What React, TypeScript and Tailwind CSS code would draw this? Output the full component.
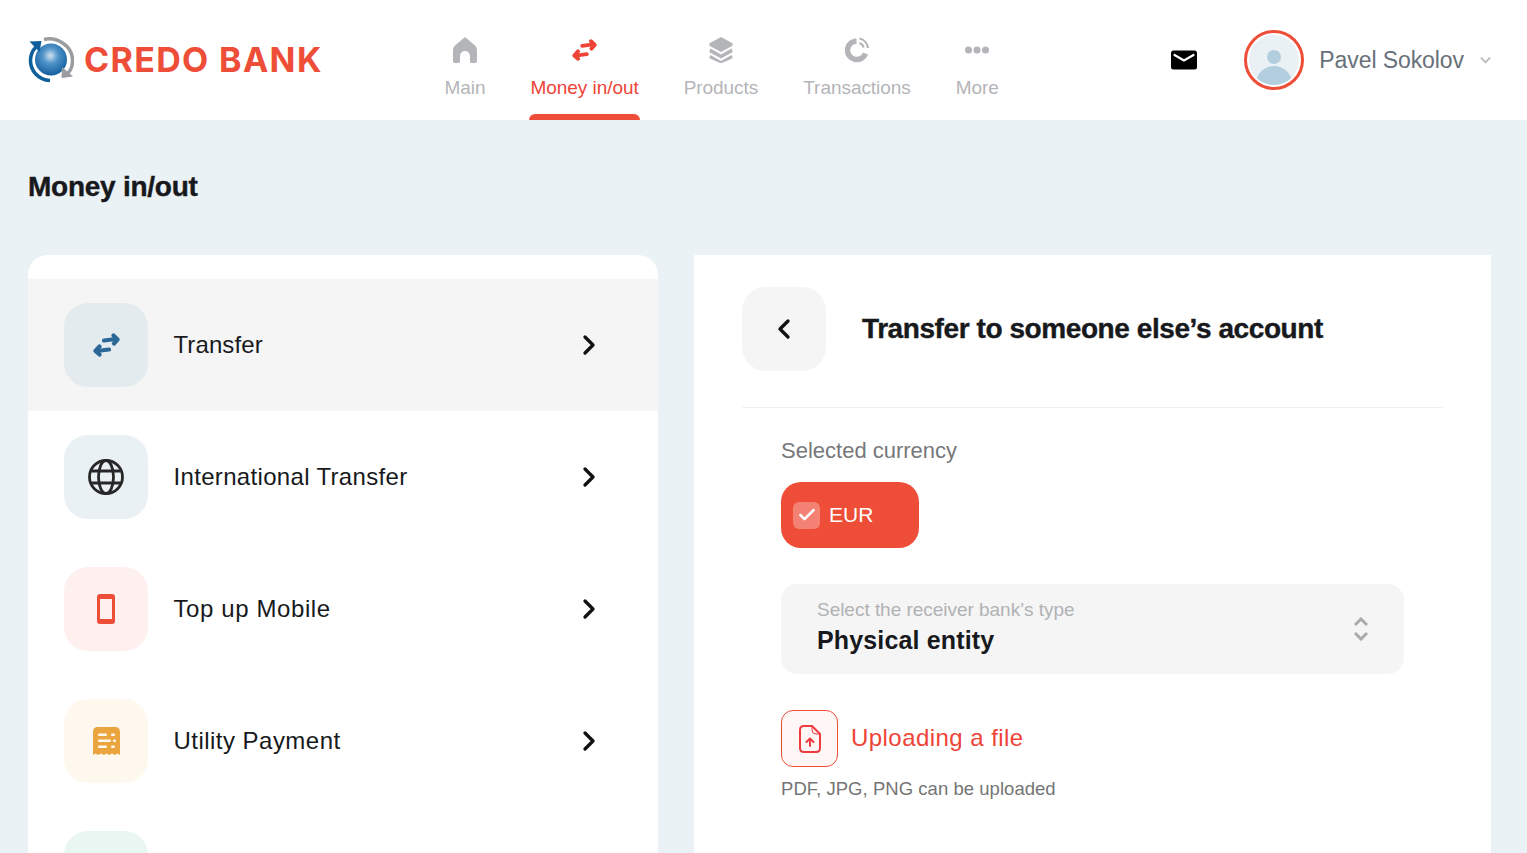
import { ChevronLeft, ChevronRight, Check } from "lucide-react";
import type { ReactNode } from "react";

function Arrows({ className }: { className?: string }) {
  return (
    <svg viewBox="0 0 27 24" className={className} fill="none" stroke="currentColor" strokeWidth="4.200" strokeLinecap="round" strokeLinejoin="round">
      <path d="M11 7.500 23 6" />
      <path d="M20.500 2.500 24.500 6.500 21 10.500" />
      <path d="M16 16.500 4 18" />
      <path d="M6.500 13.500 2.500 18 6.500 21.500" />
    </svg>
  );
}

function Logo() {
  return (
    <svg viewBox="0 0 46 46" className="h-[46px] w-[46px] shrink-0">
      <defs>
        <radialGradient id="globe" cx="0.48" cy="0.38" r="0.62">
          <stop offset="0" stopColor="#cfe2f0" />
          <stop offset="0.4" stopColor="#4f93c9" />
          <stop offset="1" stopColor="#135f9e" />
        </radialGradient>
      </defs>
      <circle cx="23" cy="22.500" r="16" fill="url(#globe)" />
      <path d="M22 43.500C10 43 2 33 2.500 22.500 2.800 17 5 13 8 10" fill="none" stroke="#0f5f9c" strokeWidth="3.500" />
      <path d="M1.500 4.500 13.500 4 11.500 15Z" fill="#0f5f9c" />
      <path d="M16 2.500C28 -0.500 44 8 44.500 22.500 44.700 29 43 33 40 36" fill="none" stroke="#9a9c9f" strokeWidth="3.500" />
      <path d="M45 39.500 33.500 41 34 30Z" fill="#9a9c9f" />
    </svg>
  );
}

const nav: { label: string; active?: boolean; icon: ReactNode }[] = [
  {
    label: "Main",
    icon: (
      <svg viewBox="0 0 24 26" className="h-[26px] w-6" fill="currentColor">
        <path d="M12 0 22 8.500Q24 10 24 13V24Q24 26 22 26H18Q17 26 17 24V19A5 5 0 0 0 7 19V24Q7 26 6 26H2Q0 26 0 24V13Q0 10 2 8.500Z" />
      </svg>
    ),
  },
  {
    label: "Money in/out",
    active: true,
    icon: <Arrows className="h-6 w-[25px]" />,
  },
  {
    label: "Products",
    icon: (
      <svg viewBox="0 0 24 26" className="h-[26px] w-6" fill="currentColor">
        <path d="M12 0 23 6Q24.500 7.500 23 9L12 15 1 9Q-.5 7.500 1 6Z" />
        <path d="M1.500 11.500 12 17.500 22.500 11.500 23.500 14Q24 15 23 15.500L12 21.500 1 15.500Q0 15 .5 14Z" />
        <path d="M1.500 18 12 24 22.500 18 23.500 20Q24 21 23 21.500L13 26H11L1 21.500Q0 21 .5 20Z" />
      </svg>
    ),
  },
  {
    label: "Transactions",
    icon: (
      <svg viewBox="0 0 24 26" className="h-[26px] w-6" fill="none" stroke="currentColor">
        <path d="M11.500 4A9.300 9.300 0 1 0 20.500 16.500" strokeWidth="5.500" />
        <path d="M14.500 1.500A11 11 0 0 1 23 11" strokeWidth="2.200" />
        <path d="M14.500 6A6 6 0 0 1 18.500 10.500" strokeWidth="2.200" />
      </svg>
    ),
  },
  {
    label: "More",
    icon: (
      <svg viewBox="0 0 24 26" className="h-[26px] w-6" fill="currentColor">
        <circle cx="3.500" cy="13" r="3.500" />
        <circle cx="12" cy="13" r="3.500" />
        <circle cx="20.500" cy="13" r="3.500" />
      </svg>
    ),
  },
];

const menu: { label: string; bg: string; text: string; active?: boolean; icon: ReactNode }[] = [
  {
    label: "Transfer",
    bg: "bg-[#e3ebef]",
    text: "tracking-[0.1px]",
    active: true,
    icon: <Arrows className="h-6 w-[27px] text-[#2a6796]" />,
  },
  {
    label: "International Transfer",
    bg: "bg-[#eaf1f5]",
    text: "tracking-[0.33px]",
    icon: (
      <svg viewBox="0 0 36 36" className="h-9 w-9" fill="none" stroke="#272727" strokeWidth="2.800">
        <circle cx="18" cy="18" r="16.500" />
        <ellipse cx="18" cy="18" rx="7.500" ry="16.500" />
        <path d="M3.500 12H32.500M3.500 24H32.500" />
      </svg>
    ),
  },
  {
    label: "Top up Mobile",
    bg: "bg-[#fdf0ee]",
    text: "tracking-[0.6px]",
    icon: (
      <svg viewBox="0 0 18 30" className="h-[30px] w-[18px]">
        <rect x="1.500" y="1.500" width="15" height="27" rx="1.500" fill="#fdf0ee" stroke="#ee4d38" strokeWidth="3" />
        <rect x="3" y="3" width="12" height="2" fill="#ee4d38" />
        <rect x="3" y="25" width="12" height="2" fill="#ee4d38" />
      </svg>
    ),
  },
  {
    label: "Utility Payment",
    bg: "bg-[#fff8ee]",
    text: "tracking-[0.47px]",
    icon: (
      <svg viewBox="0 0 27 28" className="h-7 w-[27px]">
        <path d="M0 5Q0 0 5 0H22Q27 0 27 5V28L24.500 26.500 22 28 19 26.500 16 28 13.500 26.500 11 28 8 26.500 5 28 2.500 26.500 0 28Z" fill="#eaa53f" />
        <g fill="#fff8ee">
          <rect x="5" y="6.500" width="9" height="2.500" rx="1" />
          <rect x="18" y="6.500" width="4" height="2.500" rx="1" />
          <rect x="5" y="12.500" width="13" height="2.500" rx="1" />
          <rect x="20" y="12.500" width="3" height="2.500" rx="1" />
          <rect x="5" y="18.500" width="9" height="2.500" rx="1" />
          <rect x="18" y="18.500" width="4" height="2.500" rx="1" />
        </g>
      </svg>
    ),
  },
];

export default function App() {
  return (
    <div className="h-screen overflow-hidden bg-[#ebf2f5] font-['Liberation_Sans',Arial,sans-serif] text-[#17191c]">
      {/* header */}
      <header className="flex h-[120px] items-center bg-white pl-7 pr-9">
        <div className="flex w-[416.500px] items-center gap-[10px]">
          <Logo />
          <span className="font-['Inter',sans-serif] text-[34px] leading-none font-bold tracking-[1.350px] whitespace-nowrap text-[#ee4d38]">CREDO BANK</span>
        </div>
        <nav className="flex h-full gap-[45px]">
          {nav.map((item) => (
            <div key={item.label} className={`relative flex flex-col items-center pt-[37px] text-[19px] leading-[22px] tracking-[-0.05px] ${item.active ? "text-[#ee4438]" : "text-[#b4b5b8]"}`}>
              <div className="flex h-[26px] items-center">{item.icon}</div>
              <span className="mt-[14px] whitespace-nowrap">{item.label}</span>
              {item.active && <div className="absolute -right-px bottom-0 -left-px h-[6px] rounded-t-lg bg-[#ee4d38]" />}
            </div>
          ))}
        </nav>
        <div className="ml-auto flex items-center">
          <svg viewBox="0 0 26 20" className="h-5 w-[26px]">
            <rect width="26" height="19" y="0.500" rx="2.500" fill="#000" />
            <path d="M3.500 5 13 10.500 22.500 5" fill="none" stroke="#fff" strokeWidth="2.200" strokeLinecap="round" />
          </svg>
          <div className="ml-[47px] h-[60px] w-[60px] overflow-hidden rounded-full border-[3px] border-[#ee4d38] bg-white p-[2px]">
            <svg viewBox="0 0 50 50" className="h-full w-full rounded-full bg-[#e9f1f5]">
              <circle cx="25" cy="22" r="7" fill="#b3cfdf" />
              <ellipse cx="25" cy="50" rx="18.500" ry="19" fill="#b3cfdf" />
            </svg>
          </div>
          <span className="ml-[15px] text-[23px] tracking-[-0.08px] whitespace-nowrap text-[#68707a]">Pavel Sokolov</span>
          <svg viewBox="0 0 12 8" className="ml-4 h-2 w-[11px] text-[#b4b5b8]" fill="none" stroke="currentColor" strokeWidth="1.800">
            <path d="M1 1.500 6 6.500 11 1.500" />
          </svg>
        </div>
      </header>

      <main className="px-7 pr-9">
        <h1 className="mt-[50px] text-[28px] leading-[34px] font-bold tracking-[-0.25px] [-webkit-text-stroke:0.4px_#17191c]">Money in/out</h1>

        <div className="mt-[51px] flex items-start gap-9">
          {/* left menu */}
          <div className="w-[630px] shrink-0 rounded-t-[20px] bg-white pt-6">
            {menu.map((item) => (
              <div key={item.label} className={`flex h-[132px] items-center pl-9 pr-[53px] ${item.active ? "bg-[#f5f5f5]" : ""}`}>
                <div className={`flex h-[84px] w-[84px] items-center justify-center rounded-3xl ${item.bg}`}>{item.icon}</div>
                <span className={`ml-[25.500px] flex-1 text-2xl ${item.text}`}>{item.label}</span>
                <ChevronRight className="h-8 w-8 text-[#111]" strokeWidth={2.500} />
              </div>
            ))}
            <div className="flex h-[132px] items-start pt-6 pl-9">
              <div className="h-[84px] w-[84px] rounded-3xl bg-[#e9f6f2]" />
            </div>
          </div>

          {/* right panel */}
          <section className="h-[700px] flex-1 bg-white px-12 pt-8">
            <div className="flex items-center gap-9 border-b border-[#f0f0f0] pb-9">
              <div className="flex h-[84px] w-[84px] items-center justify-center rounded-3xl bg-[#f5f5f5]">
                <ChevronLeft className="h-8 w-8 text-[#111]" strokeWidth={2.500} />
              </div>
              <h2 className="text-[28px] font-bold tracking-[-0.42px] [-webkit-text-stroke:0.4px_#17191c]">Transfer to someone else’s account</h2>
            </div>

            <div className="pl-[39px] pr-[39px]">
              <p className="mt-[30px] text-[22px] leading-[26px] text-[#77787a]">Selected currency</p>
              <div className="mt-[18px] flex h-[66px] w-[138px] items-center rounded-[20px] bg-[#ee4d38] pl-3 text-[21px] text-white">
                <div className="mr-[9px] flex h-[27px] w-[27px] items-center justify-center rounded-md bg-white/30">
                  <Check className="h-5 w-5" strokeWidth={3} />
                </div>
                EUR
              </div>

              <div className="mt-9 flex h-[90px] items-center justify-between rounded-2xl bg-[#f5f5f5] pl-9 pr-9">
                <div className="pb-[5px]">
                  <p className="text-[19px] leading-[22px] tracking-[-0.03px] text-[#b1b2b4]">Select the receiver bank’s type</p>
                  <p className="mt-[4px] text-[25px] leading-[30px] font-bold tracking-[0.15px]">Physical entity</p>
                </div>
                <div className="flex flex-col items-center gap-1 text-[#a9aaac]">
                  <svg viewBox="0 0 14 10" className="h-[10px] w-[14px]" fill="none" stroke="currentColor" strokeWidth="3">
                    <path d="M1 8 7 2 13 8" />
                  </svg>
                  <svg viewBox="0 0 14 10" className="h-[10px] w-[14px]" fill="none" stroke="currentColor" strokeWidth="3">
                    <path d="M1 2 7 8 13 2" />
                  </svg>
                </div>
              </div>

              <div className="mt-9 flex items-center gap-[13px]">
                <div className="flex h-[57px] w-[57px] items-center justify-center rounded-xl border border-[#ee4d38] bg-[#fef7f6]">
                  <svg viewBox="0 0 22 28" className="h-7 w-[22px]" fill="none" stroke="#ee3b3f" strokeWidth="2" strokeLinecap="round" strokeLinejoin="round">
                    <path d="M13 1H5Q1 1 1 5V23Q1 27 5 27H17Q21 27 21 23V9Z" />
                    <path d="M13 1V5Q13 9 17 9H21" strokeWidth="1" />
                    <path d="M11 21V13.500M7.500 17 11 13.500 14.500 17" />
                  </svg>
                </div>
                <span className="pb-[2px] text-2xl tracking-[0.45px] text-[#ee4438]">Uploading a file</span>
              </div>
              <p className="mt-[10px] text-[18.500px] leading-[24px] tracking-[0.04px] text-[#757575]">PDF, JPG, PNG can be uploaded</p>
            </div>
          </section>
        </div>
      </main>
    </div>
  );
}
